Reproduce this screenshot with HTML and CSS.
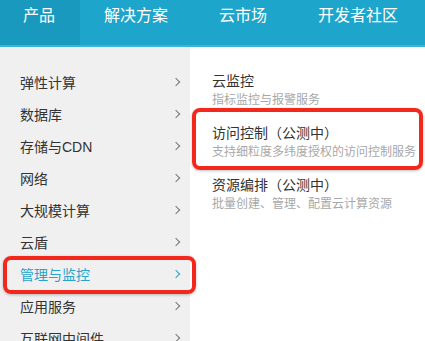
FILE: index.html
```html
<!DOCTYPE html>
<html lang="zh-CN">
<head>
    <meta charset="UTF-8">
    <meta name="viewport" content="width=device-width, initial-scale=1.0">
    <title>产品菜单</title>
    <link rel="stylesheet" href="styles.css">
</head>
<body>

<header class="topnav">
    <a class="tab active">产品</a>
    <a class="tab">解决方案</a>
    <a class="tab">云市场</a>
    <a class="tab">开发者社区</a>
</header>

<div class="menu">
    <!-- 左侧分类 -->
    <ul class="cats">
        <li class="cat">弹性计算<span class="arrow"></span></li>
        <li class="cat">数据库<span class="arrow"></span></li>
        <li class="cat">存储与CDN<span class="arrow"></span></li>
        <li class="cat">网络<span class="arrow"></span></li>
        <li class="cat">大规模计算<span class="arrow"></span></li>
        <li class="cat">云盾<span class="arrow"></span></li>
        <li class="cat active">管理与监控<span class="arrow"></span></li>
        <li class="cat">应用服务<span class="arrow"></span></li>
        <li class="cat">互联网中间件<span class="arrow"></span></li>
    </ul>

    <!-- 右侧产品 -->
    <div class="products">
        <div class="product">
            <div class="name">云监控</div>
            <div class="desc">指标监控与报警服务</div>
        </div>
        <div class="product marked">
            <div class="name">访问控制（公测中）</div>
            <div class="desc">支持细粒度多纬度授权的访问控制服务</div>
        </div>
        <div class="product">
            <div class="name">资源编排（公测中）</div>
            <div class="desc">批量创建、管理、配置云计算资源</div>
        </div>
    </div>
</div>

</body>
</html>
```

FILE: styles.css
```css
/* 顶部导航 + 下拉菜单 */
body {
    margin: 0;
    padding: 0;
    font-family: "Liberation Sans", "Noto Sans CJK SC", sans-serif;
    background-color: #ffffff;
    overflow: hidden;
}
.topnav {
    display: flex;
    height: 45px;
    background-color: #1ea5cb;
    border-bottom: 2px solid #3db3d5;
}
.tab {
    padding: 0 24px;
    line-height: 32px;
    font-size: 16px;
    color: #ffffff;
}
.tab.active {
    background-color: #1a99be;
    padding: 0 25px 0 23px;
}
.tab:nth-child(3) {
    padding-left: 27px;
}
.tab:nth-child(4) {
    padding-left: 27px;
}
.menu {
    display: flex;
    height: 294px;
}
.cats {
    list-style: none;
    margin: 0;
    padding: 19px 0 0 0;
    width: 190px;
    background-color: #f0f0f0;
}
.cat {
    position: relative;
    display: flex;
    align-items: center;
    justify-content: space-between;
    height: 32px;
    padding: 0 9px 0 20px;
    font-size: 14px;
    color: #333333;
}
.arrow {
    width: 5px;
    height: 5px;
    border-top: 1.5px solid #777777;
    border-right: 1.5px solid #777777;
    transform: rotate(45deg);
    margin-right: 2px;
}
.cat.active {
    color: #2aa3cc;
}
.cat.active .arrow {
    border-color: #2aa3cc;
}
.cat.active::after {
    content: "";
    position: absolute;
    top: -2px;
    bottom: -4px;
    left: 3px;
    right: -6px;
    border: 4px solid #f2281c;
    border-radius: 8px;
    box-shadow: 0 1px 3px rgba(0,0,0,0.25);
}
.products {
    flex: 1;
    padding-top: 17px;
}
.product {
    position: relative;
    padding: 7px 0 7px 22px;
}
.name {
    font-size: 14px;
    line-height: 20px;
    color: #333333;
}
.desc {
    font-size: 12px;
    line-height: 18px;
    color: #a8a8a8;
}
.product.marked::after {
    content: "";
    position: absolute;
    top: -8px;
    bottom: -2px;
    left: 2px;
    right: 2px;
    border: 4px solid #f2281c;
    border-radius: 8px;
    box-shadow: 0 1px 3px rgba(0,0,0,0.25);
}
```
